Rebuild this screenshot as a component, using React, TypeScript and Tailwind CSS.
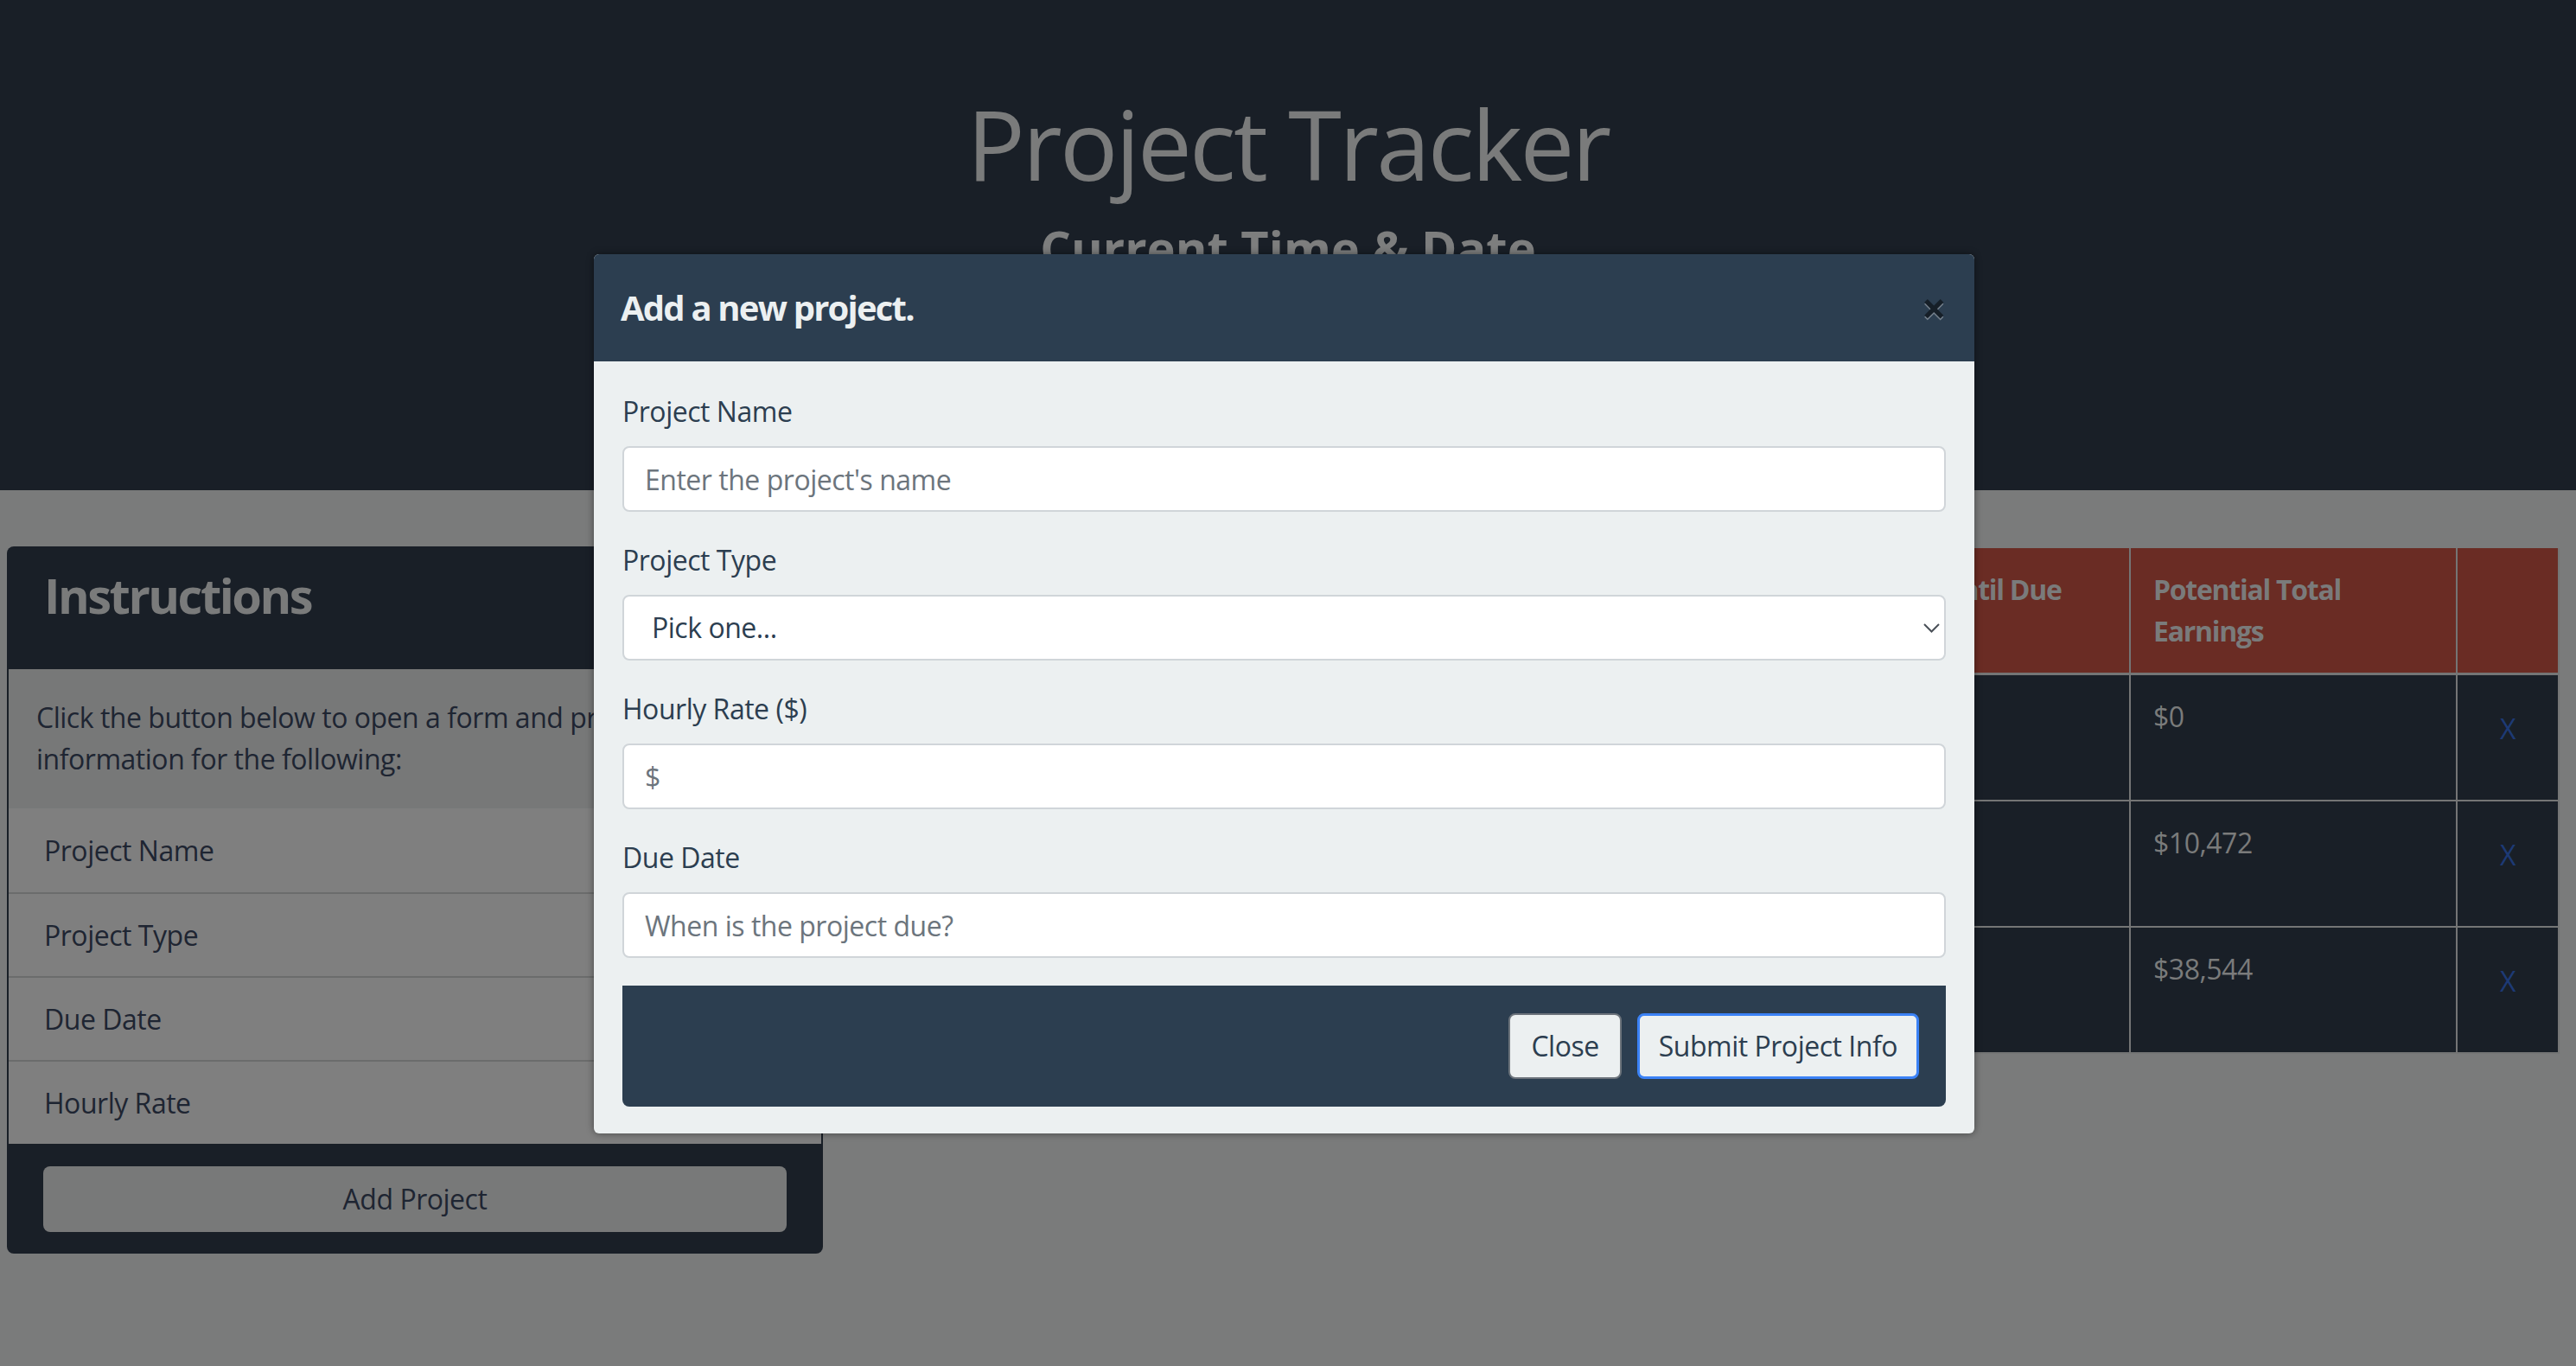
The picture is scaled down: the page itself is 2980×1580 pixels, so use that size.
import React from 'react';

const steps = ['Project Name', 'Project Type', 'Due Date', 'Hourly Rate'];

const projects = [
  { name: 'Landing page', type: 'Web', rate: '$0', due: '03/04/2024', left: '2 days', total: '$0' },
  { name: 'Mobile app', type: 'App', rate: '$34', due: '05/18/2024', left: '6 days', total: '$10,472' },
  { name: 'Shop redesign', type: 'Web', rate: '$88', due: '09/12/2024', left: '9 days', total: '$38,544' },
];

const fields = [
  { label: 'Project Name', placeholder: "Enter the project's name" },
  { label: 'Project Type', select: true },
  { label: 'Hourly Rate ($)', placeholder: '$' },
  { label: 'Due Date', placeholder: 'When is the project due?' },
];

const App = () => {
  return (
    <div className="relative w-[2980px] h-[1580px] overflow-hidden bg-[#7a7b7b] font-['Open_Sans','Noto_Sans',sans-serif] text-[32px] leading-[48px] tracking-[-0.015em] text-[#1e2532]">
      {/* Header */}
      <header className="h-[567px] bg-[#191f27] pt-[99px] text-center">
        <h1 className="text-[112px] leading-[1.2] font-normal tracking-[-0.025em] text-[#7a7b7b]">Project Tracker</h1>
        <h2 className="mt-[20px] text-[56px] leading-[1.2] font-bold tracking-[0em] text-[#7d7e7e]">Current Time &amp; Date</h2>
      </header>

      {/* Main */}
      <main className="flex items-start gap-[48px] pl-[8px] pt-[65px]">
        <section className="w-[944px] rounded-[8px] bg-[#191f27] overflow-hidden">
          <div className="h-[142px] pt-[23px] pl-[43px]">
            <h3 className="text-[56px] leading-[1.2] font-bold tracking-[-0.045em] text-[#7a7b7b]">Instructions</h3>
          </div>
          <div className="mx-[2px] bg-[#777878] pt-[32px] pb-[33px] pl-[32px] pr-[32px]">
            <p>
              Click the button below to open a form and provide project
              <br />
              information for the following:
            </p>
          </div>
          <ul className="mx-[2px] bg-[#7f7f7f]">
            {steps.map((s, i) => (
              <li key={s} className={`h-[97px] flex items-center pl-[41px] ${i > 0 ? 'border-t-2 border-[#6b6c6c]' : ''}`}>
                {s}
              </li>
            ))}
          </ul>
          <div className="pt-[26px] pb-[25px] px-[42px]">
            <button className="w-full h-[76px] rounded-[8px] bg-[#787979] text-[#1e2532]">Add Project</button>
          </div>
        </section>

        <table className="mt-[2px] table-fixed border-collapse w-[1959px] text-[#7a7b7b]">
          <colgroup>
            <col className="w-[284px]" />
            <col className="w-[284px]" />
            <col className="w-[284px]" />
            <col className="w-[285px]" />
            <col className="w-[326px]" />
            <col className="w-[378px]" />
            <col className="w-[118px]" />
          </colgroup>
          <thead>
            <tr className="h-[144px] bg-[#6a2c24]">
              {['Project Name', 'Project Type', 'Hourly Rate', 'Due Date', 'Time Until Due', 'Potential Total Earnings', ''].map((h, i) => (
                <th key={i} className="align-top text-left font-bold px-[26px] py-[24px] border-x-2 border-b-[3px] border-[#747575] border-t-0 tracking-[-0.04em]">
                  {h}
                </th>
              ))}
            </tr>
          </thead>
          <tbody>
            {projects.map((p) => (
              <tr key={p.total} className="h-[146px] bg-[#191f27]">
                <td className="align-top px-[26px] py-[24px] border-2 border-[#747575]">{p.name}</td>
                <td className="align-top px-[26px] py-[24px] border-2 border-[#747575]">{p.type}</td>
                <td className="align-top px-[26px] py-[24px] border-2 border-[#747575]">{p.rate}</td>
                <td className="align-top px-[26px] py-[24px] border-2 border-[#747575]">{p.due}</td>
                <td className="align-top px-[26px] py-[24px] border-2 border-[#747575]">{p.left}</td>
                <td className="align-top px-[26px] py-[24px] border-2 border-[#747575]">{p.total}</td>
                <td className="align-top text-center pt-[38px] border-2 border-[#747575] text-[#1d3a75]">X</td>
              </tr>
            ))}
          </tbody>
        </table>
      </main>

      {/* Modal */}
      <div className="absolute left-[687px] top-[294px] w-[1597px] rounded-[6px] overflow-hidden bg-[#ecf0f1] shadow-[0_0_8px_rgba(0,0,0,0.45)]">
        <div className="h-[124px] bg-[#2c3e50] flex items-center justify-between pl-[31px] pr-[33px]">
          <h5 className="text-[40px] leading-[60px] font-bold tracking-[-0.045em] text-[#ecf0f1]">Add a new project.</h5>
          <button className="text-[50px] leading-none font-bold text-[#161f28] [text-shadow:0_2px_0_rgba(255,255,255,0.35)]">×</button>
        </div>
        <form className="px-[33px] pt-[34px] pb-[31px] text-[#2c3e50]">
          {fields.map((f) => (
            <div key={f.label} className="mb-[32px]">
              <label className="block mb-[16px]">{f.label}</label>
              {f.select ? (
                <div className="relative">
                  <select className="appearance-none w-full h-[76px] rounded-[8px] border-2 border-[#d0d5d9] bg-white pl-[32px] text-[#2c3e50] outline-none">
                    <option>Pick one...</option>
                  </select>
                  <svg className="absolute right-[7px] top-[33px]" width="19" height="11" viewBox="0 0 19 11" fill="none">
                    <path d="M1 1l8.5 8.5L18 1" stroke="#4a5058" strokeWidth="2" />
                  </svg>
                </div>
              ) : (
                <input
                  type="text"
                  placeholder={f.placeholder}
                  className="w-full h-[76px] rounded-[8px] border-2 border-[#d0d5d9] bg-white pl-[24px] outline-none placeholder:text-[#6c757d]"
                />
              )}
            </div>
          ))}
          <div className="h-[140px] mt-[3px] bg-[#2c3e50] rounded-b-[8px] flex items-center justify-end gap-[18px] pr-[31px]">
            <button type="button" className="h-[76px] px-[24px] rounded-[8px] border-2 border-[#6c737b] bg-[#ecf0f1] text-[#2c3e50]">Close</button>
            <button type="button" className="h-[76px] px-[22px] rounded-[8px] border-[3px] border-[#3b82f6] bg-[#ecf0f1] text-[#2c3e50]">Submit Project Info</button>
          </div>
        </form>
      </div>
    </div>
  );
};

export default App;
